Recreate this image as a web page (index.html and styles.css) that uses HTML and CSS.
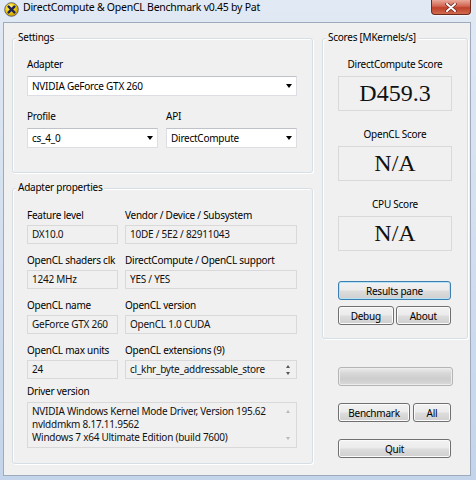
FILE: index.html
```html
<!DOCTYPE html>
<html lang="en">
<head>
    <meta charset="UTF-8">
    <title>DirectCompute &amp; OpenCL Benchmark v0.45 by Pat</title>
    <link rel="stylesheet" href="styles.css">
</head>
<body>
    <div class="window">
        <div class="titlebar">
            <svg class="app-icon" width="15" height="15" viewBox="0 0 15 15">
                <defs>
                    <radialGradient id="ball" cx="40%" cy="35%" r="65%">
                        <stop offset="0" stop-color="#fffbc0"/>
                        <stop offset="0.5" stop-color="#f6d40a"/>
                        <stop offset="1" stop-color="#c99a00"/>
                    </radialGradient>
                </defs>
                <circle cx="7.5" cy="7.5" r="6.8" fill="url(#ball)" stroke="#4a4a6a" stroke-width="0.8"/>
                <path d="M4.6 4.6 L10.4 10.4 M10.4 4.6 L4.6 10.4" stroke="#1f2458" stroke-width="2.4" stroke-linecap="round"/>
            </svg>
            <span class="title-text">DirectCompute &amp; OpenCL Benchmark v0.45 by Pat</span>
            <div class="close-btn">
                <svg width="12" height="9" viewBox="0 0 12 9">
                    <path d="M2 1 L10 8 M10 1 L2 8" stroke="#6b2218" stroke-width="3.4" stroke-linecap="round"/>
                    <path d="M2 1 L10 8 M10 1 L2 8" stroke="#ffffff" stroke-width="2" stroke-linecap="round"/>
                </svg>
            </div>
        </div>

        <div class="client">
            <div class="left-col">
                <div class="group settings">
                    <span class="group-title">Settings</span>
                    <div class="field-label">Adapter</div>
                    <div class="combo"><span>NVIDIA GeForce GTX 260</span><i class="combo-arrow"></i></div>
                    <div class="pair">
                        <div>
                            <div class="field-label">Profile</div>
                            <div class="combo"><span>cs_4_0</span><i class="combo-arrow"></i></div>
                        </div>
                        <div>
                            <div class="field-label">API</div>
                            <div class="combo"><span>DirectCompute</span><i class="combo-arrow"></i></div>
                        </div>
                    </div>
                </div>

                <div class="group props">
                    <span class="group-title">Adapter properties</span>
                    <div class="prop-grid">
                        <div>
                            <div class="prop-label">Feature level</div>
                            <div class="readonly">DX10.0</div>
                        </div>
                        <div>
                            <div class="prop-label">Vendor / Device / Subsystem</div>
                            <div class="readonly">10DE / 5E2 / 82911043</div>
                        </div>
                        <div>
                            <div class="prop-label">OpenCL shaders clk</div>
                            <div class="readonly">1242 MHz</div>
                        </div>
                        <div>
                            <div class="prop-label">DirectCompute / OpenCL support</div>
                            <div class="readonly">YES / YES</div>
                        </div>
                        <div>
                            <div class="prop-label">OpenCL name</div>
                            <div class="readonly">GeForce GTX 260</div>
                        </div>
                        <div>
                            <div class="prop-label">OpenCL version</div>
                            <div class="readonly">OpenCL 1.0 CUDA</div>
                        </div>
                        <div>
                            <div class="prop-label">OpenCL max units</div>
                            <div class="readonly">24</div>
                        </div>
                        <div>
                            <div class="prop-label">OpenCL extensions (9)</div>
                            <div class="readonly spin-field">
                                <span>cl_khr_byte_addressable_store</span>
                                <span class="spin"><i class="arrow-up"></i><i class="arrow-down"></i></span>
                            </div>
                        </div>
                    </div>
                    <div class="driver-label">Driver version</div>
                    <div class="memo">
                        <div class="memo-text">
                            NVIDIA Windows Kernel Mode Driver, Version 195.62<br>
                            nvlddmkm 8.17.11.9562<br>
                            Windows 7 x64 Ultimate Edition (build 7600)
                        </div>
                        <div class="memo-scroll"><i class="arrow-up light"></i><i class="arrow-down light"></i></div>
                    </div>
                </div>
            </div>

            <div class="right-col">
                <div class="group scores">
                    <span class="group-title">Scores [MKernels/s]</span>
                    <div class="score-label">DirectCompute Score</div>
                    <div class="score-box">D459.3</div>
                    <div class="score-label">OpenCL Score</div>
                    <div class="score-box">N/A</div>
                    <div class="score-label">CPU Score</div>
                    <div class="score-box">N/A</div>

                    <div class="btn btn-default results-btn">Results pane</div>
                    <div class="btn-row">
                        <div class="btn">Debug</div>
                        <div class="btn">About</div>
                    </div>
                </div>

                <div class="actions">
                    <div class="progress"></div>
                    <div class="btn-row bench-row">
                        <div class="btn bench-btn">Benchmark</div>
                        <div class="btn all-btn">All</div>
                    </div>
                    <div class="btn quit-btn">Quit</div>
                </div>
            </div>
        </div>
    </div>
</body>
</html>
```

FILE: styles.css
```css
body {
    margin: 0;
    font-family: "Noto Sans", sans-serif;
    font-size: 10px;
    letter-spacing: -0.25px;
    color: #000;
    background: #c6d5ea;
}

.window {
    width: 476px;
    height: 480px;
    box-sizing: border-box;
    padding: 0 5px 4px 3px;
    display: flex;
    flex-direction: column;
    background: linear-gradient(#e1e9f4, #c4d4ea);
}

/* title bar */

.titlebar {
    height: 22px;
    display: flex;
    align-items: flex-start;
    flex-shrink: 0;
}

.app-icon {
    margin: 2px 0 0 1px;
}

.title-text {
    margin-left: 4px;
    line-height: 15px;
    font-size: 10.5px;
}

.close-btn {
    margin-left: auto;
    width: 40px;
    height: 15px;
    box-sizing: border-box;
    border: 1px solid #6d2a20;
    border-top: none;
    border-radius: 0 0 4px 4px;
    background: linear-gradient(#e9a99a, #d0634f 45%, #c04029 55%, #cf6b4f);
    box-shadow: 0 1px 2px rgba(255, 255, 255, 0.8);
    display: flex;
    align-items: center;
    justify-content: center;
}

/* client area */

.client {
    flex: 1;
    display: flex;
    background: #f0f0f0;
    border: 1px solid #9eabbd;
    padding: 15px 0 0 8px;
}

.left-col {
    width: 301px;
}

.right-col {
    width: 146px;
    margin-left: 9px;
}

.group {
    position: relative;
    border: 1px solid #d5dfe5;
    border-radius: 3px;
    box-shadow: inset 1px 1px 0 #fff, 1px 1px 0 #fff;
}

.group-title {
    position: absolute;
    top: -9px;
    left: 3px;
    padding: 0 2px;
    line-height: 15px;
    background: #f0f0f0;
}

/* settings */

.settings {
    padding: 18px 15px 24px 14px;
}

.field-label {
    line-height: 15px;
    margin-bottom: 4px;
}

.combo {
    height: 20px;
    box-sizing: border-box;
    display: flex;
    align-items: center;
    padding: 0 4px 0 4px;
    background: #fff;
    border: 1px solid #dcdee3;
    border-top-color: #bfc2c8;
}

.combo-arrow {
    margin-left: auto;
    width: 0;
    height: 0;
    border-left: 3.5px solid transparent;
    border-right: 3.5px solid transparent;
    border-top: 4px solid #000;
}

.pair {
    display: grid;
    grid-template-columns: 131px 131px;
    column-gap: 8px;
    margin-top: 13px;
}

/* adapter properties */

.props {
    margin-top: 15px;
    padding: 19px 15px 15px 14px;
}

.prop-grid {
    display: grid;
    grid-template-columns: 91px 172px;
    column-gap: 7px;
    row-gap: 9px;
}

.prop-label,
.driver-label {
    line-height: 15px;
    margin-bottom: 2px;
    white-space: nowrap;
}

.driver-label {
    margin-top: 5px;
    margin-bottom: 3px;
}

.readonly {
    height: 19px;
    box-sizing: border-box;
    border: 1px solid #d9d9d9;
    background: #f0f0f0;
    padding-left: 4px;
    line-height: 17px;
    color: #111;
    white-space: nowrap;
}

.spin-field {
    display: flex;
    align-items: center;
}

.spin {
    margin-left: auto;
    margin-right: 6px;
    display: flex;
    flex-direction: column;
    gap: 4px;
}

.arrow-up,
.arrow-down {
    width: 0;
    height: 0;
    border-left: 2.5px solid transparent;
    border-right: 2.5px solid transparent;
}

.arrow-up {
    border-bottom: 3px solid #555;
}

.arrow-down {
    border-top: 3px solid #555;
}

.arrow-up.light {
    border-bottom-color: #b8b8b8;
}

.arrow-down.light {
    border-top-color: #b8b8b8;
}

.memo {
    height: 46px;
    box-sizing: border-box;
    border: 1px solid #d9d9d9;
    background: #f0f0f0;
    display: flex;
    color: #111;
}

.memo-text {
    flex: 1;
    padding: 2px 0 0 4px;
    line-height: 13px;
    white-space: nowrap;
}

.memo-scroll {
    width: 17px;
    display: flex;
    flex-direction: column;
    align-items: center;
    justify-content: space-between;
    padding: 7px 0 7px;
    box-sizing: border-box;
}

/* scores */

.scores {
    padding: 18px 15px 13px 15px;
}

.score-label {
    line-height: 15px;
    margin-bottom: 4px;
    text-align: center;
}

.score-box {
    height: 35px;
    box-sizing: border-box;
    border: 1px solid #d9d9d9;
    background: #f0f0f0;
    font-family: "Liberation Serif", serif;
    font-size: 24px;
    letter-spacing: 0;
    line-height: 33px;
    text-align: center;
    color: #111;
    margin-bottom: 16px;
}

.scores .score-box:last-of-type {
    margin-bottom: 0;
}

.btn {
    height: 19px;
    box-sizing: border-box;
    border: 1px solid #707070;
    border-radius: 3px;
    background: linear-gradient(#f2f2f2 0%, #ebebeb 48%, #dddddd 52%, #cfcfcf 100%);
    box-shadow: inset 0 0 0 1px #fbfbfb;
    display: flex;
    align-items: center;
    justify-content: center;
    width: 113px;
}

.btn-default {
    border-color: #3c7fb1;
    box-shadow: inset 0 0 0 1px #b6e2f6;
}

.results-btn {
    margin-top: 30px;
}

.btn-row {
    display: flex;
    gap: 2px;
    width: 113px;
    margin-top: 6px;
}

.btn-row .btn {
    flex: 1;
    width: auto;
}

/* bottom actions */

.actions {
    padding-left: 16px;
}

.progress {
    width: 115px;
    height: 19px;
    box-sizing: border-box;
    margin-top: 28px;
    border: 1px solid #b5b5b5;
    border-radius: 3px;
    background: linear-gradient(#ececec, #d8d8d8 30%, #cdcdcd 65%, #dadada);
    box-shadow: inset 0 0 0 1px #ececec;
}

.bench-row {
    margin-top: 17px;
    gap: 3px;
}

.bench-row .bench-btn {
    flex: 0 0 72px;
}

.bench-row .all-btn {
    flex: 1;
}

.quit-btn {
    margin-top: 17px;
}
```
